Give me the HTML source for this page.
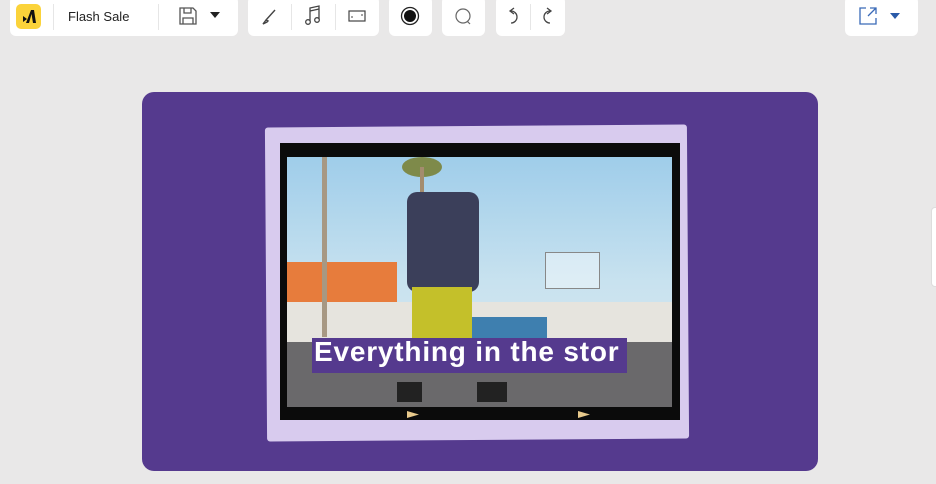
<!DOCTYPE html>
<html><head><meta charset="utf-8"><style>
*{margin:0;padding:0;box-sizing:border-box}
body{width:936px;height:484px;background:#e9e8e8;position:relative;overflow:hidden;font-family:"Liberation Sans",sans-serif}
.g{position:absolute;top:-4px;height:40px;background:#fff;border-radius:6px}
.sep{position:absolute;top:4px;width:1px;height:26px;background:#e6e6e6}
svg{display:block}
.a{position:absolute}
</style></head><body>
<div class="g" style="left:10px;width:228px">
 <div class="a" style="left:6px;top:8px;width:25px;height:25px;background:#fbd33a;border-radius:5px">
  <svg width="25" height="25"><path d="M7 12 L11 15 L7 18Z M10 19 L15 6 L18 6 L20 19 L17 19 L15.5 10 L13 19Z" fill="#111"/></svg></div>
 <div class="sep" style="left:43px;top:8px"></div>
 <div class="a" style="left:58px;top:13px;font-size:13px;color:#222">Flash Sale</div>
 <div class="sep" style="left:148px;top:8px"></div>
 <svg class="a" style="left:168px;top:10px" width="20" height="20"><path d="M2 2h13l3 3v13H2Z M6 2v5h7V2 M5 18v-6h10v6" fill="none" stroke="#555" stroke-width="1.3"/></svg>
 <svg class="a" style="left:200px;top:16px" width="10" height="6"><path d="M0 0h10L5 6Z" fill="#222"/></svg>
</div>
<div class="g" style="left:248px;width:131px">
 <svg class="a" style="left:12px;top:12px" width="18" height="18"><path d="M15 2 L6 12 M6 12 L3 16 L7 14 L8 13 Z" fill="none" stroke="#444" stroke-width="1.4"/></svg>
 <div class="sep" style="left:43px;top:8px"></div>
 <svg class="a" style="left:56px;top:9px" width="18" height="22"><path d="M6 16V3l9-2v13" fill="none" stroke="#444" stroke-width="1.3"/><circle cx="4" cy="17" r="2.3" fill="none" stroke="#444" stroke-width="1.3"/><circle cx="13" cy="15" r="2.3" fill="none" stroke="#444" stroke-width="1.3"/><path d="M6 6l9-2" stroke="#444" stroke-width="1.3"/></svg>
 <div class="sep" style="left:87px;top:8px"></div>
 <svg class="a" style="left:100px;top:14px" width="18" height="12"><rect x="1" y="1" width="16" height="10" fill="none" stroke="#444" stroke-width="1.2"/><path d="M4 8V6 M14 4v2" stroke="#444"/></svg>
</div>
<div class="g" style="left:389px;width:43px">
 <svg class="a" style="left:11px;top:10px" width="20" height="20"><circle cx="10" cy="10" r="8.5" fill="none" stroke="#222" stroke-width="1.3"/><circle cx="10" cy="10" r="6" fill="#111"/></svg>
</div>
<div class="g" style="left:442px;width:43px">
 <svg class="a" style="left:12px;top:11px" width="20" height="20"><circle cx="9" cy="9" r="7" fill="none" stroke="#666" stroke-width="1.2"/><path d="M13 14l3 3" stroke="#666" stroke-width="1.2"/></svg>
</div>
<div class="g" style="left:496px;width:69px">
 <svg class="a" style="left:9px;top:10px" width="18" height="20"><path d="M6 5 A6 6 0 1 1 6 17" fill="none" stroke="#444" stroke-width="1.3"/><path d="M9 2 L5 5 L9 8" fill="none" stroke="#444" stroke-width="1.3"/></svg>
 <div class="sep" style="left:34px;top:8px"></div>
 <svg class="a" style="left:42px;top:10px" width="18" height="20"><path d="M12 5 A6 6 0 1 0 12 17" fill="none" stroke="#444" stroke-width="1.3"/><path d="M9 2 L13 5 L9 8" fill="none" stroke="#444" stroke-width="1.3"/></svg>
</div>
<div class="g" style="left:845px;width:73px">
 <svg class="a" style="left:14px;top:11px" width="18" height="18"><path d="M7 1H1v16h16v-6" fill="none" stroke="#3a6ab8" stroke-width="1.3"/><path d="M9 9L17 1M11 1h6v6" fill="none" stroke="#3a6ab8" stroke-width="1.3"/></svg>
 <svg class="a" style="left:45px;top:17px" width="10" height="6"><path d="M0 0h10L5 6Z" fill="#2a5aa8"/></svg>
</div>
<div class="a" style="left:931px;top:207px;width:10px;height:80px;background:#fff;border-radius:4px;border:1px solid #ddd"></div>

<div class="a" style="left:142px;top:92px;width:676px;height:379px;background:#553a8e;border-radius:12px"></div>
<div class="a" style="left:266px;top:126px;width:422px;height:314px;background:#d8cbee;transform:rotate(-0.4deg);border-radius:3px"></div>
<div class="a" style="left:280px;top:143px;width:400px;height:277px;background:#0b0b0b"></div>
<div class="a" style="left:287px;top:157px;width:385px;height:250px;overflow:hidden;background:linear-gradient(#9fcdea,#c8e2ef 50%,#dfeaee)">
 <div class="a" style="left:0;top:105px;width:110px;height:70px;background:#e77c3c"></div>
 <div class="a" style="left:0;top:145px;width:385px;height:40px;background:#e6e4de"></div>
 <div class="a" style="left:135px;top:160px;width:125px;height:25px;background:#3e7faf"></div>
 <div class="a" style="left:0;top:185px;width:385px;height:65px;background:#6a696b"></div>
 <div class="a" style="left:35px;top:0;width:5px;height:180px;background:#a79883"></div>
 <div class="a" style="left:115px;top:0;width:40px;height:20px;background:#7e8a4a;border-radius:50%"></div>
 <div class="a" style="left:133px;top:10px;width:4px;height:170px;background:#a48c6e"></div>
 <div class="a" style="left:120px;top:35px;width:72px;height:100px;background:#3b3f5a;border-radius:10px"></div>
 <div class="a" style="left:125px;top:130px;width:60px;height:85px;background:#c4c02a"></div>
 <div class="a" style="left:110px;top:225px;width:25px;height:20px;background:#222"></div>
 <div class="a" style="left:190px;top:225px;width:30px;height:20px;background:#222"></div>
 <div class="a" style="left:258px;top:95px;width:55px;height:37px;border:1px solid #888;background:rgba(255,255,255,.4)"></div>
</div>
<div class="a" style="left:312px;top:338px;width:315px;height:35px;background:#553a8e"></div>
<div class="a" style="left:314px;top:336px;font-size:28px;font-weight:bold;color:#fff;letter-spacing:0.8px;white-space:nowrap">Everything in the stor</div>
<svg class="a" style="left:407px;top:411px" width="12" height="7"><path d="M0 0L12 3.5L0 7Z" fill="#e8c98c"/></svg>
<svg class="a" style="left:578px;top:411px" width="12" height="7"><path d="M0 0L12 3.5L0 7Z" fill="#e8c98c"/></svg>
</body></html>
